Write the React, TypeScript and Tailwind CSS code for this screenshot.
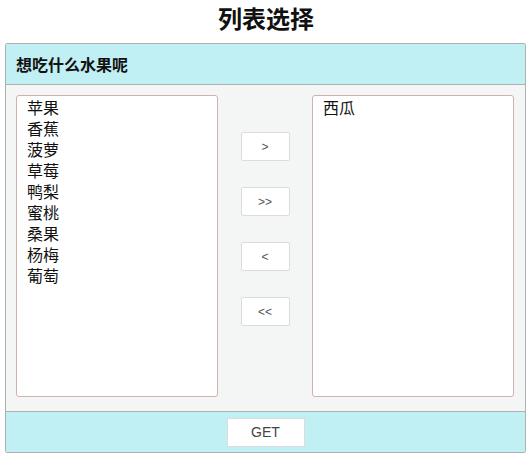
import React from "react";

const fruits = ["苹果", "香蕉", "菠萝", "草莓", "鸭梨", "蜜桃", "桑果", "杨梅", "葡萄"];
const chosen = ["西瓜"];

const cjk = { fontFamily: '"Noto Sans CJK SC", "Noto Sans", sans-serif' };
const latin = { fontFamily: '"Liberation Sans", Arial, sans-serif' };

function ListBox({ items }: { items: string[] }) {
  return (
    <div className="w-[202px] h-[302px] bg-white border border-[#d2b0ad] rounded-[3px] pt-[1px] pl-[10px]">
      {items.map((f) => (
        <div key={f} className="text-[16px] leading-[21px] text-[#111]" style={cjk}>
          {f}
        </div>
      ))}
    </div>
  );
}

function MoveButton({ label }: { label: string }) {
  return (
    <button
      className="w-[49px] h-[29px] bg-white border border-[#dcdcdc] rounded-[2px] text-[12px] text-[#555] flex items-center justify-center"
      style={latin}
    >
      {label}
    </button>
  );
}

export default function App() {
  return (
    <div className="w-[532px] h-[469px] bg-white">
      <h2
        className="text-center text-[24px] leading-[24px] font-bold text-[#111] pt-[6px] pb-[13px]"
        style={cjk}
      >
        列表选择
      </h2>
      <div className="ml-[5px] w-[521px] border border-[#b0b0b0] rounded-[2px] overflow-hidden">
        <div className="h-[41px] bg-[#c0eff4] border-b border-[#b0b0b0] flex items-center pl-[10px]">
          <span className="text-[16px] font-bold text-[#111]" style={cjk}>
            想吃什么水果呢
          </span>
        </div>
        <div className="bg-[#f4f6f6] flex pl-[10px] pr-[11px] pt-[10px] pb-[14px]">
          <ListBox items={fruits} />
          <div className="flex-1 flex flex-col items-center pt-[37px] gap-[26px]">
            <MoveButton label=">" />
            <MoveButton label=">>" />
            <MoveButton label="<" />
            <MoveButton label="<<" />
          </div>
          <ListBox items={chosen} />
        </div>
        <div className="h-[41px] bg-[#c0eff4] border-t border-[#b0b0b0] flex items-center justify-center">
          <button
            className="w-[78px] h-[29px] bg-white border border-[#dcdcdc] text-[14px] text-[#444]"
            style={latin}
          >
            GET
          </button>
        </div>
      </div>
    </div>
  );
}
